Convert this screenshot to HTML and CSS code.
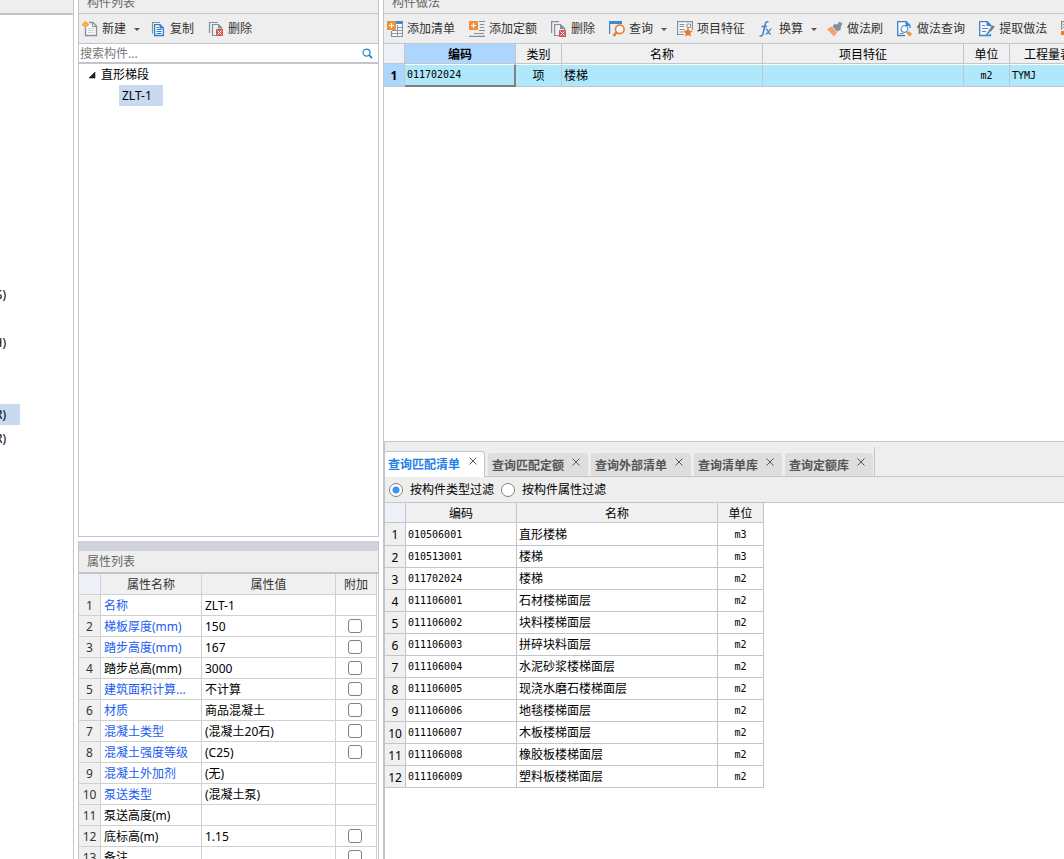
FILE: index.html
```html
<!DOCTYPE html>
<html lang="zh-CN">
<head>
<meta charset="utf-8">
<title>构件做法</title>
<link rel="stylesheet" href="styles.css">
</head>
<body>
<main class="workspace">
  <nav class="module-nav">
    <div class="module-head"></div>
    <ul class="module-list">
      <li>(S)</li>
      <li></li>
      <li>(H)</li>
      <li></li>
      <li></li>
      <li class="current">(R)</li>
      <li>(R)</li>
    </ul>
  </nav>

  <div class="side">
    <section class="panel list-panel">
      <h2 class="title">构件列表</h2>
      <div class="toolbar">
        <button class="tool"><svg class="icon" viewBox="0 0 16 16" fill="none"><path d="M3.500 7v7.500h11V5L11 1.500H7" fill="#f7f8f9" stroke="#82929c" stroke-width="1.300"/><path d="M10.500 1.500v4h4" stroke="#82929c"/><path d="M6 7.500h6M6 9.500h6M6 11.500h6" stroke="#cfd5d9"/><path d="M1.500 1.500l4 4M5.500 1.500l-4 4M3.500 0v2M3.500 5v2M0 3.500h2M5 3.500h2" stroke="#f0a02c" stroke-width="1.300"/></svg>新建<span class="caret"></span></button>
        <button class="tool"><svg class="icon" viewBox="0 0 16 16" fill="none"><path d="M2.500 12.500V1.500H10" stroke="#82929c" stroke-width="1.200"/><path d="M4.600 3.600h5.400l3.400 3.400v7.500H4.600z" fill="#fff" stroke="#2f7bd0" stroke-width="1.300"/><path d="M9.500 3.500v4h4z" fill="#2f7bd0"/><path d="M6.500 6.500H9M6.500 8.500h5M6.500 10.500h5M6.500 12.500h5" stroke="#2f7bd0"/></svg>复制</button>
        <button class="tool"><svg class="icon" viewBox="0 0 16 16" fill="none"><path d="M1.500 12V1.500H10" stroke="#82929c" stroke-width="1.200"/><path d="M8 14.500H4.500v-11h6l3 3V8" stroke="#82929c" stroke-width="1.200"/><path d="M10 3.500v4h4z" fill="#82929c"/><rect x="8" y="8" width="7" height="7" fill="#d75757"/><path d="M9.500 9.500l4 4M13.500 9.500l-4 4" stroke="#fff"/></svg>删除</button>
      </div>
      <label class="search">
        <input type="text" placeholder="搜索构件..." aria-label="搜索构件">
        <svg class="search-icon" viewBox="0 0 12 12" fill="none" stroke="#2385bd"><circle cx="5" cy="5" r="3.800" stroke-width="1.300"/><path d="M7.800 7.800L11 11" stroke-width="1.900"/></svg>
      </label>
      <ul class="tree">
        <li><span class="branch"><svg class="twisty" viewBox="0 0 8 8"><path d="M7 1v6H1z" fill="#202020" stroke="#202020" stroke-width=".6"/></svg>直形梯段</span>
          <ul><li><span class="leaf">ZLT-1</span></li></ul>
        </li>
      </ul>
    </section>

    <section class="panel props-panel">
      <div class="grip"></div>
      <h2 class="title">属性列表</h2>
      <table class="grid props">
        <colgroup><col class="w22"><col class="w101"><col class="w134"><col class="w41"></colgroup>
        <thead><tr><th class="corner"></th><th>属性名称</th><th>属性值</th><th>附加</th></tr></thead>
        <tbody>
          <tr><th>1</th><td class="link">名称</td><td>ZLT-1</td><td></td></tr>
          <tr><th>2</th><td class="link">梯板厚度(mm)</td><td>150</td><td><input type="checkbox" aria-label="附加 梯板厚度"></td></tr>
          <tr><th>3</th><td class="link">踏步高度(mm)</td><td>167</td><td><input type="checkbox" aria-label="附加 踏步高度"></td></tr>
          <tr><th>4</th><td>踏步总高(mm)</td><td>3000</td><td><input type="checkbox" aria-label="附加 踏步总高"></td></tr>
          <tr><th>5</th><td class="link">建筑面积计算...</td><td>不计算</td><td><input type="checkbox" aria-label="附加 建筑面积计算"></td></tr>
          <tr><th>6</th><td class="link">材质</td><td>商品混凝土</td><td><input type="checkbox" aria-label="附加 材质"></td></tr>
          <tr><th>7</th><td class="link">混凝土类型</td><td>(混凝土20石)</td><td><input type="checkbox" aria-label="附加 混凝土类型"></td></tr>
          <tr><th>8</th><td class="link">混凝土强度等级</td><td>(C25)</td><td><input type="checkbox" aria-label="附加 混凝土强度等级"></td></tr>
          <tr><th>9</th><td class="link">混凝土外加剂</td><td>(无)</td><td></td></tr>
          <tr><th>10</th><td class="link">泵送类型</td><td>(混凝土泵)</td><td></td></tr>
          <tr><th>11</th><td>泵送高度(m)</td><td></td><td></td></tr>
          <tr><th>12</th><td>底标高(m)</td><td>1.15</td><td><input type="checkbox" aria-label="附加 底标高"></td></tr>
          <tr><th>13</th><td>备注</td><td></td><td><input type="checkbox" aria-label="附加 备注"></td></tr>
        </tbody>
      </table>
    </section>
  </div>

  <div class="main">
    <section class="method-panel">
      <h2 class="title">构件做法</h2>
      <div class="toolbar">
        <button class="tool"><svg class="icon" viewBox="0 0 16 16" fill="none"><path d="M9 .5h6.500v15h-11V10" fill="#fafafa" stroke="#82929c" stroke-width="1.200"/><path d="M9 0h7v3H9z" fill="#3f88d8"/><path d="M10.500 4v11M10 6.500h5M5 9.500h10M5 12.500h10" stroke="#8b99a2"/><rect width="9" height="9" fill="#f0913a"/><path d="M4.500 2v5M2 4.500h5" stroke="#fff" stroke-width="1.200"/></svg>添加清单</button>
        <button class="tool"><svg class="icon" viewBox="0 0 16 16" fill="none"><path d="M10 .5h6M11 3.500h4M11 6.500h4M10 9.500h6M5 12.500h10M0 15.300h16" stroke="#82929c" stroke-width="1.200"/><rect width="9" height="9" fill="#f0913a"/><path d="M4.500 2v5M2 4.500h5" stroke="#fff" stroke-width="1.200"/></svg>添加定额</button>
        <button class="tool"><svg class="icon" viewBox="0 0 16 16" fill="none"><path d="M.6 12V.6H8" stroke="#82929c" stroke-width="1.200"/><path d="M8 14.500H3.600V3.500h6l4 4V9" stroke="#82929c" stroke-width="1.200"/><path d="M9 3.500v4.500h5z" fill="#82929c"/><rect x="8" y="9" width="7" height="7" fill="#d75757"/><path d="M9.500 10.500l4 4M13.500 10.500l-4 4" stroke="#fff"/></svg>删除</button>
        <button class="tool"><svg class="icon" viewBox="0 0 16 16" fill="none"><path d="M.6 13V2" stroke="#3f88d8" stroke-width="1.200"/><path d="M0 0h13v3H0z" fill="#3f88d8"/><circle cx="10.800" cy="8.300" r="4.300" fill="#fafafa" stroke="#ea7b2c" stroke-width="1.600"/><path d="M7.500 11.500L4.500 15" stroke="#ea7b2c" stroke-width="2.600"/></svg>查询<span class="caret"></span></button>
        <button class="tool"><svg class="icon" viewBox="0 0 16 16" fill="none"><path d="M7 13.500H.6V.6h14.800V9" fill="#fafafa" stroke="#82929c" stroke-width="1.200"/><path d="M2.500 3.500h5M2.500 5.500h5M2.500 8.500h5M2.500 11h4M10 3h3.500v3.500H10z" stroke="#82929c"/><path d="M11 6.500l1.500 3 3.300.500-2.400 2.300.600 3.300-3-1.600-3 1.600.600-3.300L6.200 10l3.300-.500z" fill="#ea7b2c"/></svg>项目特征</button>
        <button class="tool"><svg class="icon" viewBox="0 0 16 16" fill="none" stroke="#3f86c9"><path d="M9.500 1C7.500 0 6.500 1.500 6 4L4 12.500c-.5 2.500-2 3-3.500 2M2.500 5.500H8" stroke-width="1.500"/><path d="M6.500 8c2.500-1 2.500 6 5.500 5M12.500 8c-2-1-3.500 6-6 5" stroke-width="1.300"/></svg>换算<span class="caret"></span></button>
        <button class="tool"><svg class="icon" viewBox="0 0 16 16"><path d="M10 3.500l2.500-3L15.500 2.500 14 5.500l-.500 3.500L10 10.500 5.500 5.500l2-2.500z" fill="#82929d"/><path d="M4.500 5.500L10 11.500 7 15.500 0 8z" fill="#f79c6c"/></svg>做法刷</button>
        <button class="tool"><svg class="icon" viewBox="0 0 16 16" fill="none"><path d="M8 14.500H.7V.7h8.500l3.800 3.800V7" fill="#fafafa" stroke="#3f80cf" stroke-width="1.300"/><path d="M8.500 0v5H13z" fill="#3f80cf"/><circle cx="7.500" cy="8" r="3.300" fill="#fafafa" stroke="#5a9ade" stroke-width="1.200"/><path d="M2.500 12.500h4" stroke="#82929c"/><path d="M10 11l1.500 1.500" stroke="#5a9ade"/><path d="M12.200 10.200l2.800 2.800-2.400 2.400-2.800-2.800z" fill="#f09a28"/></svg>做法查询</button>
        <button class="tool"><svg class="icon" viewBox="0 0 16 16" fill="none"><path d="M11.500 13v1.500H.7V.7h7.500L12 4.500V6" fill="#fafafa" stroke="#3f80cf" stroke-width="1.300"/><path d="M7.500 0v5H12z" fill="#3f80cf"/><path d="M3 4.500h3M3 7.500h6M3 10.500h4" stroke="#5a8fc9"/><path d="M14.800 5l-4.600 5.500" stroke="#6e7f8a" stroke-width="2.600"/><path d="M10 10.500l-2.500 4" stroke="#43a2c4" stroke-width="2.200"/></svg>提取做法</button>
        <button class="tool" aria-label="更多"><svg class="icon" viewBox="0 0 16 16" fill="none"><path d="M.6 9V.6h13v8M2 3.500h10M2 6.500h10" stroke="#82929c" stroke-width="1.200"/><path d="M0 10h9v4H0z" fill="#ea7b2c"/></svg></button>
      </div>
      <table class="grid bill">
        <colgroup><col class="w21"><col class="w111"><col class="w46"><col class="w201"><col class="w201"><col class="w46"><col class="w101"></colgroup>
        <thead><tr><th class="corner"></th><th class="active">编码</th><th>类别</th><th>名称</th><th>项目特征</th><th>单位</th><th>工程量表达式</th></tr></thead>
        <tbody><tr class="selected"><th>1</th><td class="code focus">011702024</td><td class="center">项</td><td>楼梯</td><td></td><td class="code center">m2</td><td class="code">TYMJ</td></tr></tbody>
      </table>
    </section>

    <section class="query-panel">
      <div class="tabs" role="tablist">
        <div class="tab on"><button role="tab" aria-selected="true">查询匹配清单</button><button class="close" aria-label="关闭"><svg viewBox="0 0 8 8"><path d="M.5 .5l7 7M7.500 .5l-7 7"/></svg></button></div>
        <div class="tab"><button role="tab">查询匹配定额</button><button class="close" aria-label="关闭"><svg viewBox="0 0 8 8"><path d="M.5 .5l7 7M7.500 .5l-7 7"/></svg></button></div>
        <div class="tab"><button role="tab">查询外部清单</button><button class="close" aria-label="关闭"><svg viewBox="0 0 8 8"><path d="M.5 .5l7 7M7.500 .5l-7 7"/></svg></button></div>
        <div class="tab"><button role="tab">查询清单库</button><button class="close" aria-label="关闭"><svg viewBox="0 0 8 8"><path d="M.5 .5l7 7M7.500 .5l-7 7"/></svg></button></div>
        <div class="tab"><button role="tab">查询定额库</button><button class="close" aria-label="关闭"><svg viewBox="0 0 8 8"><path d="M.5 .5l7 7M7.500 .5l-7 7"/></svg></button></div>
        <span class="tabs-end"></span>
      </div>
      <div class="filters">
        <label><input type="radio" name="filter" checked>按构件类型过滤</label>
        <label><input type="radio" name="filter">按构件属性过滤</label>
      </div>
      <table class="grid match">
        <colgroup><col class="w21"><col class="w111"><col class="w201"><col class="w46"></colgroup>
        <thead><tr><th class="corner"></th><th>编码</th><th>名称</th><th>单位</th></tr></thead>
        <tbody>
          <tr><th>1</th><td class="code">010506001</td><td>直形楼梯</td><td class="code center">m3</td></tr>
          <tr><th>2</th><td class="code">010513001</td><td>楼梯</td><td class="code center">m3</td></tr>
          <tr><th>3</th><td class="code">011702024</td><td>楼梯</td><td class="code center">m2</td></tr>
          <tr><th>4</th><td class="code">011106001</td><td>石材楼梯面层</td><td class="code center">m2</td></tr>
          <tr><th>5</th><td class="code">011106002</td><td>块料楼梯面层</td><td class="code center">m2</td></tr>
          <tr><th>6</th><td class="code">011106003</td><td>拼碎块料面层</td><td class="code center">m2</td></tr>
          <tr><th>7</th><td class="code">011106004</td><td>水泥砂浆楼梯面层</td><td class="code center">m2</td></tr>
          <tr><th>8</th><td class="code">011106005</td><td>现浇水磨石楼梯面层</td><td class="code center">m2</td></tr>
          <tr><th>9</th><td class="code">011106006</td><td>地毯楼梯面层</td><td class="code center">m2</td></tr>
          <tr><th>10</th><td class="code">011106007</td><td>木板楼梯面层</td><td class="code center">m2</td></tr>
          <tr><th>11</th><td class="code">011106008</td><td>橡胶板楼梯面层</td><td class="code center">m2</td></tr>
          <tr><th>12</th><td class="code">011106009</td><td>塑料板楼梯面层</td><td class="code center">m2</td></tr>
        </tbody>
      </table>
    </section>
  </div>
</main>
</body>
</html>
```

FILE: styles.css
```css
* { box-sizing: border-box; }

:root {
  --line: #c2c5cb;
  --bar: #eeeeee;
  --head: #f0f0f0;
  --corner: #edf1f7;
}

body {
  margin: 0;
  overflow: hidden;
  background: #fff;
  color: #000;
  font: 12px/16px "Noto Sans", "Noto Sans CJK SC", sans-serif;
}

button, input { font: inherit; color: inherit; }
button { border: 0; padding: 0; background: none; }
ul { margin: 0; padding: 0; list-style: none; }

.workspace {
  display: grid;
  grid-template-columns: 74px 301px minmax(0, 1fr);
  column-gap: 4px;
  height: 100vh;
}

/* Module navigation */
.module-nav { border-right: 1px solid var(--line); overflow: hidden; }
.module-head { height: 15px; background: var(--bar); border-bottom: 2px solid var(--line); }
.module-list { display: grid; gap: 3px; margin-top: 269px; }
.module-list li {
  display: flex;
  justify-content: flex-end;
  align-items: center;
  width: 20px;
  height: 21px;
  padding-right: 14px;
}
.module-list .current { background: #c9d9f0; }

/* Panels */
.side {
  display: grid;
  grid-template-rows: minmax(0, 1fr) 318px;
  row-gap: 4px;
  height: 100vh;
}
.panel { border: 1px solid var(--line); overflow: hidden; }
.list-panel { border-top: 0; }
.props-panel { border-top: 0; border-bottom: 0; }
.title {
  margin: 0;
  height: 22px;
  padding-left: 8px;
  background: var(--bar);
  border-bottom: 1px solid var(--line);
  color: #666;
  font-size: 12px;
  font-weight: 400;
  line-height: 22px;
}
.list-panel .title, .method-panel .title { margin-top: -8px; }
.props-panel .title { height: 23px; border-bottom-width: 2px; }
.grip { height: 10px; background: #d1d3da; }

.toolbar {
  display: flex;
  align-items: center;
  gap: 14px;
  height: 30px;
  padding-left: 3px;
  background: var(--bar);
  border-bottom: 1px solid var(--line);
  overflow: hidden;
}
.tool {
  display: flex;
  flex: none;
  align-items: center;
  gap: 4px;
  color: #333;
}
.icon { width: 16px; height: 16px; }
.caret {
  margin: 2px -4px 0 4px;
  border: 3px solid transparent;
  border-width: 3px 3px 0;
  border-top-color: #555;
}

.search {
  display: flex;
  align-items: center;
  height: 20px;
  padding: 0 5px 0 1px;
  border-bottom: 2px solid var(--line);
}
.search input {
  flex: 1;
  min-width: 0;
  height: 18px;
  padding: 0;
  border: 0;
  outline: 0;
}
.search input::placeholder { color: #777; }
.search-icon { width: 11px; height: 11px; }

.tree { line-height: 21px; }
.branch { display: flex; align-items: center; gap: 5px; padding-left: 9px; }
.twisty { width: 8px; height: 8px; }
.leaf {
  display: inline-block;
  margin-left: 40px;
  padding: 0 11px 0 3px;
  background: #c9d9f0;
}

/* Data grids */
.grid { border-collapse: separate; border-spacing: 0; table-layout: fixed; width: 0; }
.grid th, .grid td {
  height: 22px;
  padding: 0 0 0 2px;
  border: 0 solid var(--line);
  border-width: 0 1px 1px 0;
  font-weight: 400;
  text-align: left;
  white-space: nowrap;
  overflow: hidden;
}
.grid th { padding: 2px 0 0; background: var(--head); text-align: center; }
.grid thead th { height: 20px; }
.grid .corner { background: var(--corner); }
.grid .code { font-family: "DejaVu Sans Mono", monospace; font-size: 10px; }
.grid .center { padding: 0; text-align: center; }
.w21 { width: 21px; }
.w22 { width: 22px; }
.w41 { width: 41px; }
.w46 { width: 46px; }
.w101 { width: 101px; }
.w111 { width: 111px; }
.w134 { width: 134px; }
.w201 { width: 201px; }

.grid.props th, .grid.props td { height: 21px; border-color: #d0d0d0; }
.grid.props th { color: #333; }
.grid.props td { padding: 2px 0 0 3px; }
.grid.props .link { color: #1a5cf0; }
.grid.props td:last-child { padding: 0 2px 0 0; text-align: center; }
.grid input {
  appearance: none;
  display: block;
  width: 14px;
  height: 14px;
  margin: 0 auto;
  border: 1px solid #808080;
  border-radius: 3px;
  background: #fff;
}

.bill tbody tr:first-child td, .match tbody tr:first-child td {
  height: 23px;
  border-top: 1px solid #fff;
}
.grid .active { background: #add6ff; font-weight: 700; }
.selected td { background: #aee8fa; }
.grid .selected th { background: #add6ff; font-weight: 700; }
.grid .focus { border-right: 2px solid #808080; border-bottom: 2px solid #808080; }

/* Right side */
.main {
  display: grid;
  grid-template-rows: minmax(0, 1fr) 417px;
  height: 100vh;
  border-left: 1px solid var(--line);
}
.method-panel { border-bottom: 1px solid var(--line); overflow: hidden; }
.query-panel { border-left: 1px solid var(--line); overflow: hidden; }

.tabs {
  display: flex;
  align-items: flex-end;
  gap: 3px;
  height: 35px;
  background: var(--bar);
  box-shadow: inset 0 -1px var(--line);
}
.tab {
  display: flex;
  align-items: center;
  gap: 8px;
  height: 23px;
  margin-bottom: 1px;
  padding: 2px 8px 0 4px;
  border-radius: 3px 3px 0 0;
  background: #dedede;
  color: #555;
  font-weight: 700;
}
.tab.on {
  height: 26px;
  margin-bottom: 0;
  padding: 0 7px 0 3px;
  border: 1px solid var(--line);
  border-width: 1px 1px 0 0;
  background: #fff;
  color: #1f80e8;
}
.tab.on .close { padding-left: 1px; }
.close { height: 16px; display: flex; }
.close svg { width: 8px; height: 8px; fill: none; stroke: #555; }
.tabs-end { width: 1px; height: 30px; margin-left: -2px; background: var(--line); }

.filters {
  display: flex;
  align-items: center;
  gap: 7px;
  height: 26px;
  padding-left: 4px;
  background: var(--bar);
  border-bottom: 1px solid var(--line);
}
.filters label { display: flex; align-items: center; gap: 7px; }
.filters input {
  appearance: none;
  width: 14px;
  height: 14px;
  margin: 0;
  border: 1px solid #808080;
  border-radius: 50%;
  background: #fff;
}
.filters input:checked { background: radial-gradient(circle, #3b94f5 3px, #fff 4px); }
```
